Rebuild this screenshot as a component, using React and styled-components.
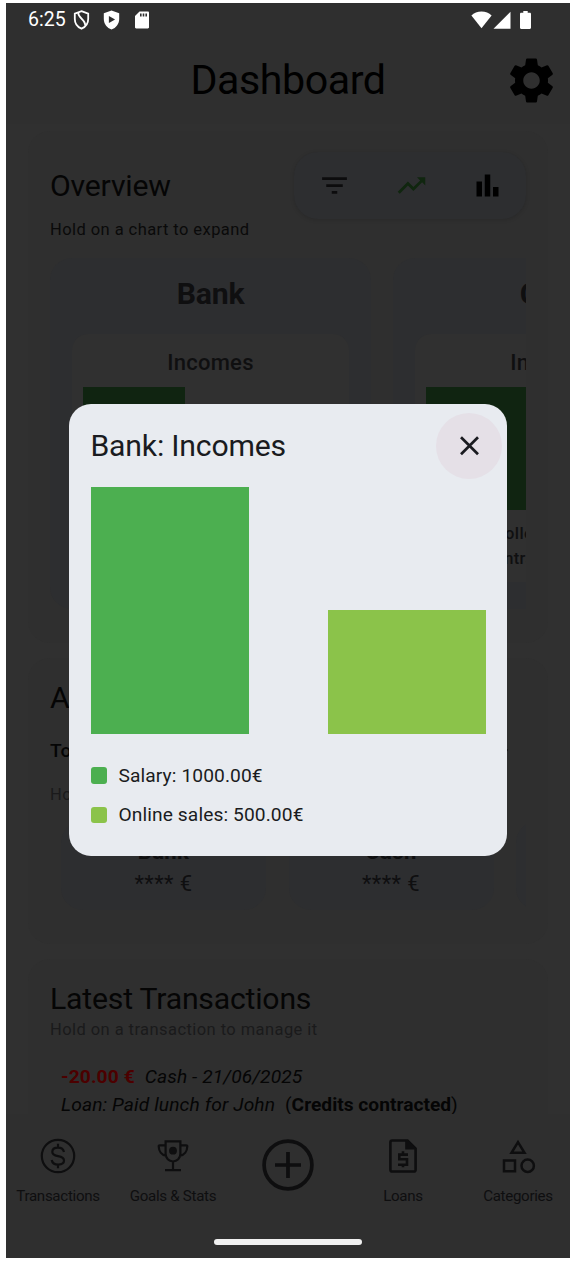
import React from "react";
import styled, { createGlobalStyle } from "styled-components";

const GlobalStyle = createGlobalStyle`
  * { box-sizing: border-box; }
  body { margin: 0; background: #fff; font-family: Roboto, sans-serif; }
  svg { display: block; flex: none; }
`;

const Screen = styled.div`
  position: relative;
  display: flex;
  flex-direction: column;
  width: 564px;
  height: 1255px;
  margin: 3px 0 0 6px;
  overflow: hidden;
  background: #303030;
  color: #050505;
`;

const StatusBar = styled.div`
  display: flex;
  align-items: center;
  height: 33px;
  padding: 0 39px 0 22px;
  background: #2f2f2f;
  color: #fff;
  font-size: 19.5px;
`;
const Clock = styled.span`
  width: 44.5px;
  white-space: nowrap;
`;
const StatusIcons = styled.div`
  display: flex;
  align-items: center;
  gap: ${(p) => p.$gap}px;
  margin-left: ${(p) => (p.$end ? "auto" : 0)};
`;
const StatusGap = styled.span`
  width: 6px;
`;

const TitleBar = styled.header`
  display: flex;
  align-items: center;
  justify-content: flex-end;
  height: 88px;
  padding-right: 11px;
  background: #2f2f2f;
  color: #000;
`;
const PageTitle = styled.h1`
  flex: 1;
  margin: 0;
  padding-left: 66px;
  text-align: center;
  font-size: 41.2px;
  font-weight: 400;
  letter-spacing: -0.45px;
`;

const Content = styled.main`
  display: flex;
  flex-direction: column;
  flex: 1;
  min-height: 0;
  gap: 15px;
  padding: 7px 22px 0;
  overflow: hidden;
`;
const Section = styled.section`
  flex: none;
  height: ${(p) => p.$height}px;
  padding: ${(p) => p.$top}px 22px 0;
  border-radius: 22px;
  background: #2f2f2f;
  overflow: hidden;
`;
const SectionHead = styled.div`
  display: flex;
  align-items: center;
  justify-content: space-between;
`;
const SectionTitle = styled.h2`
  margin: 0;
  font-size: 30.2px;
  line-height: 38px;
  font-weight: 400;
  white-space: nowrap;
  letter-spacing: -0.2px;
`;
const Hint = styled.p`
  margin: ${(p) => p.$top || 0}px 0 0;
  font-size: 16.5px;
  line-height: 22px;
  letter-spacing: 0.43px;
  white-space: nowrap;
  color: ${(p) => (p.$muted ? "#1a1a1b" : "#0a0a0a")};
`;
const ChartTools = styled.div`
  display: flex;
  align-items: center;
  justify-content: space-between;
  width: 232px;
  height: 67px;
  padding: 0 22px 0 24px;
  border-radius: 24px;
  background: #2d2e30;
  box-shadow: 0 1px 4px rgba(0, 0, 0, 0.14);
`;
const Carousel = styled.div`
  display: flex;
  gap: ${(p) => p.$gap}px;
  margin-top: ${(p) => p.$top}px;
  padding-left: ${(p) => p.$inset || 0}px;
  overflow: hidden;
`;
const ChartCard = styled.article`
  flex: none;
  width: 321px;
  height: 351px;
  padding: 16px 22px 26px;
  border-radius: 22px;
  background: #2d2e30;
  color: #0f0f10;
`;
const ChartCardTitle = styled.h3`
  margin: 0 0 20px;
  text-align: center;
  font-size: 30.2px;
  line-height: 40px;
  font-weight: 700;
  letter-spacing: -0.2px;
`;
const ChartPanel = styled.div`
  height: 248px;
  padding: 15px 11px;
  border-radius: 16px;
  background: #303030;
`;
const ChartPanelTitle = styled.h4`
  margin: 0 0 11px;
  text-align: center;
  font-size: 22px;
  line-height: 27px;
  font-weight: 500;
  letter-spacing: 0.25px;
`;
const MiniBar = styled.div`
  width: 102px;
  height: 123px;
  background: #102411;
`;
const MiniLegend = styled.div`
  display: flex;
  align-items: center;
  gap: 4px;
  margin-top: ${(p) => p.$top}px;
  font-size: 16.5px;
  line-height: 22px;
  font-weight: 500;
  letter-spacing: 0.4px;
  white-space: nowrap;
`;
const MiniSwatch = styled.span`
  width: 6px;
  height: 6px;
  border-radius: 1px;
  background: #102411;
`;

const TotalRow = styled.div`
  display: flex;
  align-items: center;
  justify-content: space-between;
  height: 28px;
  margin-top: 19px;
  padding-right: 17px;
  font-size: 19.2px;
  font-weight: 500;
`;
const AccountCard = styled.article`
  flex: none;
  width: 205px;
  height: 89px;
  padding-top: 14.5px;
  border-radius: 22px;
  background: #2d2e30;
  color: #0f0f10;
  text-align: center;
  font-size: 22px;
  line-height: 32px;
  letter-spacing: 0.4px;
`;
const AccountName = styled.div`
  font-weight: 700;
`;

const Transaction = styled.div`
  margin: 22px 0 0 11px;
  font-size: 19.2px;
  line-height: 27.5px;
  letter-spacing: 0.12px;
  white-space: pre;
`;
const Amount = styled.b`
  color: #4c0000;
`;
const Category = styled.b`
  letter-spacing: 0;
`;

const NavBar = styled.nav`
  display: flex;
  flex: none;
  gap: 11px;
  height: 144px;
  padding-top: 22px;
  background: #2f2f2f;
  color: #0e0e0f;
`;
const NavItem = styled.div`
  display: flex;
  flex-direction: column;
  align-items: center;
  width: 104px;
  padding-top: ${(p) => (p.$large ? 2 : 0)}px;
  font-size: 15.1px;
  line-height: 20px;
  gap: 10px;
  letter-spacing: -0.3px;
  white-space: nowrap;
`;
const HomeIndicator = styled.div`
  position: absolute;
  left: 208px;
  bottom: 13px;
  width: 148px;
  height: 6px;
  border-radius: 3px;
  background: #f0f0f0;
`;

const DialogLayer = styled.div`
  position: absolute;
  inset: 0;
  display: flex;
  align-items: center;
  justify-content: center;
  padding-bottom: 2px;
`;
const Dialog = styled.div`
  width: 438px;
  height: 452px;
  padding: 9px 5px 0 21.5px;
  border-radius: 22px;
  background: #e8ebf0;
  color: #1a1b20;
`;
const CloseButton = styled.button`
  display: flex;
  align-items: center;
  justify-content: center;
  width: 66px;
  height: 66px;
  padding: 0;
  border: 0;
  border-radius: 50%;
  background: #e5e0e7;
  color: #1a1b20;
`;
const BarChart = styled.div`
  display: flex;
  align-items: flex-end;
  justify-content: space-between;
  width: 395px;
  height: 247px;
  margin: 8px 0 22px;
`;
const Bar = styled.div`
  width: 158px;
  background: ${(p) => p.$color};
`;
const LegendRow = styled.div`
  display: flex;
  align-items: center;
  gap: 11.5px;
  height: 39.5px;
  font-size: 19.2px;
  letter-spacing: 0.1px;
`;
const Swatch = styled.span`
  width: 16.5px;
  height: 16.5px;
  border-radius: 3px;
  background: ${(p) => p.$color};
`;

const Icon = ({ size = 33, color = "currentColor", d }) => (
  <svg width={size} height={size} viewBox="0 0 24 24" fill={color}>
    <path d={d} />
  </svg>
);

const paths = {
  settings:
    "M19.14 12.94c.04-.3.06-.61.06-.94 0-.32-.02-.64-.07-.94l2.03-1.58c.18-.14.23-.41.12-.61l-1.92-3.32c-.12-.22-.37-.29-.59-.22l-2.39.96c-.5-.38-1.03-.7-1.62-.94L14.4 2.81c-.04-.24-.24-.41-.48-.41h-3.84c-.24 0-.43.17-.47.41L9.25 5.35c-.59.24-1.13.57-1.62.94l-2.39-.96c-.22-.08-.47 0-.59.22L2.74 8.87c-.12.21-.08.47.12.61l2.03 1.58c-.05.3-.09.63-.09.94s.02.64.07.94l-2.03 1.58c-.18.14-.23.41-.12.61l1.92 3.32c.12.22.37.29.59.22l2.39-.96c.5.38 1.03.7 1.62.94l.36 2.54c.05.24.24.41.48.41h3.84c.24 0 .44-.17.47-.41l.36-2.54c.59-.24 1.13-.56 1.62-.94l2.39.96c.22.08.47 0 .59-.22l1.92-3.32c.12-.22.07-.47-.12-.61l-2.01-1.58zM12 15.6c-1.98 0-3.6-1.62-3.6-3.6s1.62-3.6 3.6-3.6 3.6 1.62 3.6 3.6-1.62 3.6-3.6 3.6z",
  filter: "M10 18h4v-2h-4v2zM3 6v2h18V6H3zm3 7h12v-2H6v2z",
  trending: "M16 6l2.29 2.29-4.88 4.88-4-4L2 16.59 3.41 18l6-6 4 4 6.3-6.29L22 12V6z",
  bars: "M4 9h4v11H4zM16 13h4v7h-4zM10 4h4v16h-4z",
  eye: "M12 4.5C7 4.5 2.73 7.61 1 12c1.73 4.39 6 7.5 11 7.5s9.27-3.11 11-7.5c-1.73-4.39-6-7.5-11-7.5zM12 17a5 5 0 1 1 0-10 5 5 0 0 1 0 10z",
};

const OutlineShield = () => (
  <svg width="17" height="20" viewBox="0 0 17 20" fill="none" stroke="#fff" strokeWidth="1.8">
    <path d="M8.5 1.2 15.2 3.6V9c0 4.6-2.8 8.1-6.7 9.7C4.6 17.1 1.8 13.6 1.8 9V3.6z" />
    <path d="M5.2 2.6C5 8.6 12.6 9 12.2 15.6" />
  </svg>
);
const PlayShield = () => (
  <svg width="17" height="20" viewBox="0 0 17 20">
    <path d="M8.5.4 16.2 3.3V9c0 5-3.2 9-7.7 10.5C4 18 .8 14 .8 9V3.3z" fill="#fff" />
    <path d="M5.9 5.9v7.2L12.1 9.5z" fill="#303030" />
  </svg>
);
const SdCard = () => (
  <svg width="17" height="18" viewBox="-1.5 0 17 18">
    <path d="M5 .5h8.3c.7 0 1.2.5 1.2 1.2v14.6c0 .7-.5 1.2-1.2 1.2H1.7c-.7 0-1.2-.5-1.2-1.2V5z" fill="#fff" />
    <path d="M5.5 2.5h1.6v3H5.5zM8.2 2.5h1.6v3H8.2zM10.9 2.5h1.6v3h-1.6z" fill="#303030" />
  </svg>
);
const Wifi = () => (
  <svg width="21" height="18" viewBox="0 0 21 18" fill="#fff">
    <path d="M10.5.6C6.5.6 3 2.1.4 4.5L10.5 17.3 20.6 4.5C18 2.1 14.5.6 10.5.6z" />
  </svg>
);
const Signal = () => (
  <svg width="18" height="18" viewBox="0 0 18 18" fill="#fff">
    <path d="M.5 17.7 17.5.7v17z" />
  </svg>
);
const Battery = () => (
  <svg width="11" height="18" viewBox="0 0 11 18" fill="#fff">
    <path d="M3.3 0h4.4v1.8h2.1c.7 0 1.2.5 1.2 1.2v13.8c0 .7-.5 1.2-1.2 1.2H1.2C.5 18 0 17.5 0 16.8V3c0-.7.5-1.2 1.2-1.2h2.1z" />
  </svg>
);

const DollarIcon = () => (
  <svg width="40" height="40" viewBox="0 0 40 40" fill="none" stroke="currentColor" strokeWidth="2.2">
    <circle cx="20" cy="20" r="16.2" />
    <path d="M20 7.8v4M20 28.4v3.9M26 16c-.6-2.7-2.9-4.3-6-4.3-3.4 0-5.7 1.7-5.7 4.3 0 2.7 2.2 3.5 5.7 4.2 3.9.8 6 1.9 6 4.4 0 2.4-2.4 4-5.8 4-3.5 0-6-1.7-6.5-4.6" />
  </svg>
);
const TrophyIcon = () => (
  <svg width="40" height="40" viewBox="0 0 40 40" fill="none" stroke="currentColor" strokeWidth="2.2">
    <path d="M12.6 5.4h14.8v12.4c0 4.5-3.3 7.7-7.4 7.7s-7.4-3.2-7.4-7.7zM20 26v8M12 34.2h16M12.6 9.3H6.8c-.7 0-1.2.4-1.1 1.2.2 4.6 2.8 8.6 7.4 9.2M27.4 9.3h5.8c.7 0 1.2.4 1.1 1.2-.2 4.6-2.8 8.6-7.4 9.2" />
    <circle cx="20" cy="14.7" r="3.9" fill="currentColor" stroke="none" />
  </svg>
);
const AddIcon = () => (
  <svg width="54" height="54" viewBox="0 0 54 54" fill="none" stroke="currentColor" strokeWidth="3.7">
    <circle cx="27" cy="27" r="23.9" />
    <path d="M14 27h26M27 14v26" />
  </svg>
);
const LoanIcon = () => (
  <svg width="40" height="40" viewBox="0 0 40 40" fill="none" stroke="currentColor" strokeWidth="2.6">
    <path d="M24.5 4.5H9.2c-1 0-1.8.8-1.8 1.8v27.4c0 1 .8 1.8 1.8 1.8h21.6c1 0 1.8-.8 1.8-1.8V12.6z" />
    <path d="M23 4.5h2.5l7.5 8v.9H22.2V4.5z" fill="currentColor" stroke="none" />
    <path d="M25 18.6h-8.7v4.7H24v5.5h-9M20 15.3v3M20 28.8v2.5" />
  </svg>
);
const ShapesIcon = () => (
  <svg width="40" height="40" viewBox="0 0 40 40" fill="none" stroke="currentColor" strokeWidth="2.5">
    <path d="M20 6.2 26.5 16.8H13.5zM6 24.400h11v10.800h-11z" />
    <circle cx="29.7" cy="29.8" r="6.2" />
  </svg>
);
const CloseIcon = () => (
  <svg width="33" height="33" viewBox="0 0 33 33" stroke="currentColor" strokeWidth="2.7">
    <path d="M8 8.300 25 25.300M25 8.300 8 25.300" />
  </svg>
);

const wallets = [
  { name: "Bank", legend: ["Salary: 1000.00€", "Online sales: 500.00€"] },
  { name: "Cash", legend: ["Credits collected", "Debts contracted"] },
];
const accounts = ["Bank", "Cash", "Savings"];
const incomes = [
  { label: "Salary: 1000.00€", color: "#4caf50", share: 100 },
  { label: "Online sales: 500.00€", color: "#8bc34a", share: 50 },
];
const tabs = [
  { label: "Transactions", icon: <DollarIcon /> },
  { label: "Goals & Stats", icon: <TrophyIcon /> },
  { label: "", icon: <AddIcon />, large: true },
  { label: "Loans", icon: <LoanIcon /> },
  { label: "Categories", icon: <ShapesIcon /> },
];

export default function App() {
  return (
    <>
      <GlobalStyle />
      <Screen>
        <StatusBar>
          <Clock>6:25</Clock>
          <StatusIcons $gap={13}>
            <OutlineShield />
            <PlayShield />
            <SdCard />
          </StatusIcons>
          <StatusIcons $gap={1.5} $end>
            <Wifi />
            <Signal />
            <StatusGap />
            <Battery />
          </StatusIcons>
        </StatusBar>
        <TitleBar>
          <PageTitle>Dashboard</PageTitle>
          <Icon size={55} d={paths.settings} />
        </TitleBar>

        <Content>
          <Section $height={512} $top={21}>
            <SectionHead>
              <SectionTitle>Overview</SectionTitle>
              <ChartTools>
                <Icon d={paths.filter} color="#0c0c0d" />
                <Icon d={paths.trending} color="#10260f" />
                <Icon d={paths.bars} color="#000" />
              </ChartTools>
            </SectionHead>
            <Hint $top={0}>Hold on a chart to expand</Hint>
            <Carousel $gap={22} $top={17}>
              {wallets.map((w) => (
                <ChartCard key={w.name}>
                  <ChartCardTitle>{w.name}</ChartCardTitle>
                  <ChartPanel>
                    <ChartPanelTitle>Incomes</ChartPanelTitle>
                    <MiniBar />
                    {w.legend.map((text, i) => (
                      <MiniLegend key={text} $top={i ? 3 : 13}>
                        <MiniSwatch />
                        {text}
                      </MiniLegend>
                    ))}
                  </ChartPanel>
                </ChartCard>
              ))}
            </Carousel>
          </Section>

          <Section $height={286} $top={21}>
            <SectionTitle>Accounts</SectionTitle>
            <TotalRow>
              <span>Total: **** €</span>
              <Icon size={30} d={paths.eye} />
            </TotalRow>
            <Hint $top={20} $muted>
              Hold on an account to manage it
            </Hint>
            <Carousel $gap={22.5} $top={15} $inset={11}>
              {accounts.map((name) => (
                <AccountCard key={name}>
                  <AccountName>{name}</AccountName>
                  **** €
                </AccountCard>
              ))}
            </Carousel>
          </Section>

          <Section $height={240} $top={21}>
            <SectionTitle>Latest Transactions</SectionTitle>
            <Hint $top={1} $muted>
              Hold on a transaction to manage it
            </Hint>
            <Transaction>
              <Amount>-20.00 €</Amount>
              {"  "}
              <i>Cash - 21/06/2025</i>
              {"\n"}
              <i>Loan: Paid lunch for John</i>
              {"  ("}
              <Category>Credits contracted</Category>)
            </Transaction>
          </Section>
        </Content>

        <NavBar>
          {tabs.map((tab, i) => (
            <NavItem key={i} $large={tab.large}>
              {tab.icon}
              {tab.label}
            </NavItem>
          ))}
        </NavBar>

        <DialogLayer>
          <Dialog>
            <SectionHead>
              <SectionTitle>Bank: Incomes</SectionTitle>
              <CloseButton aria-label="Close">
                <CloseIcon />
              </CloseButton>
            </SectionHead>
            <BarChart>
              {incomes.map((item) => (
                <Bar key={item.label} $color={item.color} style={{ height: `${item.share}%` }} />
              ))}
            </BarChart>
            {incomes.map((item) => (
              <LegendRow key={item.label}>
                <Swatch $color={item.color} />
                {item.label}
              </LegendRow>
            ))}
          </Dialog>
        </DialogLayer>
        <HomeIndicator />
      </Screen>
    </>
  );
}
